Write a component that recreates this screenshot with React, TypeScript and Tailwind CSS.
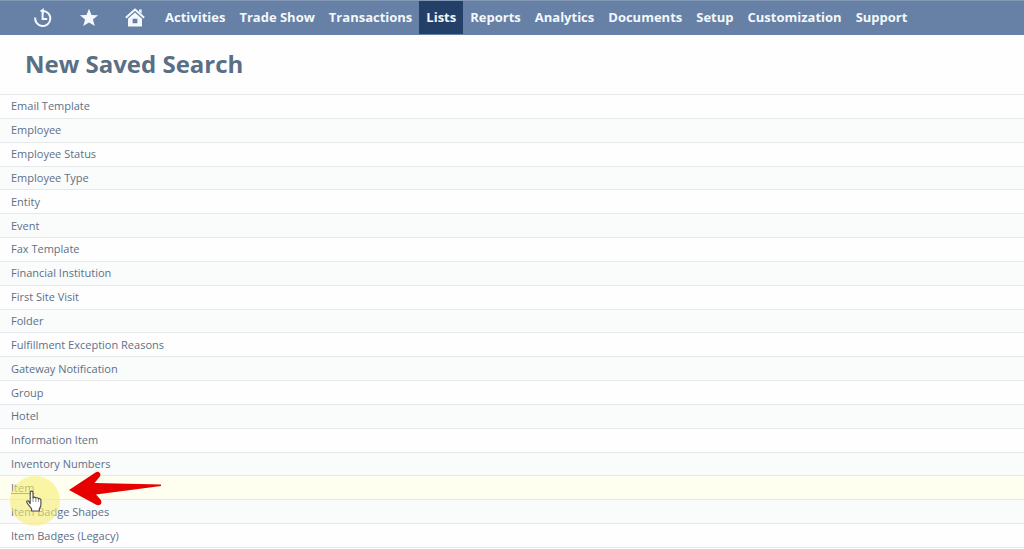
interface NavItem {
  label: string;
  active?: boolean;
}

const NAV_ITEMS: NavItem[] = [
  { label: "Activities" },
  { label: "Trade Show" },
  { label: "Transactions" },
  { label: "Lists", active: true },
  { label: "Reports" },
  { label: "Analytics" },
  { label: "Documents" },
  { label: "Setup" },
  { label: "Customization" },
  { label: "Support" },
];

const SEARCH_TYPES = [
  "Email Template",
  "Employee",
  "Employee Status",
  "Employee Type",
  "Entity",
  "Event",
  "Fax Template",
  "Financial Institution",
  "First Site Visit",
  "Folder",
  "Fulfillment Exception Reasons",
  "Gateway Notification",
  "Group",
  "Hotel",
  "Information Item",
  "Inventory Numbers",
  "Item",
  "Item Badge Shapes",
  "Item Badges (Legacy)",
];

const HOVERED = "Item";

function RecentIcon() {
  return (
    <svg width="20" height="20" viewBox="0 0 20 20" fill="none" stroke="currentColor" aria-hidden="true">
      <path d="M2.200 9.500A7.600 7.600 0 1 0 10 2.900" strokeWidth="2" />
      <path d="M10.800 0v5.800L6.800 2.900z" fill="currentColor" stroke="none" />
      <path d="M9.600 4.500v6.500h4.600" strokeWidth="2" />
    </svg>
  );
}

function StarIcon() {
  return (
    <svg width="20" height="20" viewBox="0 0 20 20" fill="currentColor" aria-hidden="true">
      <path d="M10 .8l2.500 6.200 6.600.3-5.200 4.100 1.900 6.700-5.800-3.700-5.800 3.700 1.900-6.700L.9 7.300l6.600-.3z" />
    </svg>
  );
}

function HomeIcon() {
  return (
    <svg width="20" height="20" viewBox="0 0 20 20" fill="currentColor" aria-hidden="true">
      <path d="M14 1.400h2.600v4.400L14 3.400z" />
      <path d="M.8 9.800L10 1.600l9.200 8.200" fill="none" stroke="currentColor" strokeWidth="2" />
      <path d="M10 4.600l7 6.200v7.600H3v-7.600zM7.600 10.800v4.400h4.800v-4.400z" fillRule="evenodd" />
    </svg>
  );
}

function Pointer() {
  return (
    <svg width="18" height="23" viewBox="0 0 18 23" aria-hidden="true">
      <path
        d="M5.200 13.600V2.600c0-2 2.800-2 2.800 0V8c.4-1.300 2.600-1.200 2.800.3.6-1 2.500-.7 2.600.7.8-.8 2.500-.4 2.500 1.100v4.700c0 2-1.300 3-1.600 4.500V21H6.600v-2C5.800 17.200 3.800 15.600 2.200 13c-1.300-2 .6-3.100 1.800-1.400z"
        fill="#fff"
        stroke="#444"
        strokeWidth="1.1"
        strokeLinejoin="round"
      />
      <path d="M8 8v4M10.800 8.500V12M13.400 9.500V12" stroke="#777" strokeWidth="0.8" />
    </svg>
  );
}

function Arrow() {
  return (
    <svg width="94" height="36" viewBox="0 0 94 36" aria-hidden="true">
      <path
        d="M1 19L27.500 1.400c3.500-2 6.500 2 4 4.600L26.500 12 93 13.500v1.500L28 23.500l4.500 5c2.500 4-.8 6.800-4.300 5.300z"
        fill="#e60000"
      />
    </svg>
  );
}

function NavBar() {
  return (
    <nav className="flex h-[35px] shrink-0 items-stretch overflow-hidden border-t border-[#8199b5] bg-[#6780a5] pb-px text-[#f3f8fc]">
      <div className="flex shrink-0 items-center gap-[26px] pr-[13px] pl-[33px]">
        <button type="button" aria-label="Recent records">
          <RecentIcon />
        </button>
        <button type="button" aria-label="Shortcuts">
          <StarIcon />
        </button>
        <button type="button" aria-label="Home">
          <HomeIcon />
        </button>
      </div>
      <div className="flex text-[13px] font-bold whitespace-nowrap">
        {NAV_ITEMS.map((item) => (
          <a
            key={item.label}
            href="#"
            aria-current={item.active ? "page" : undefined}
            className={`flex items-center px-[7px] ${item.active ? "bg-[#243f68]" : ""}`}
          >
            {item.label}
          </a>
        ))}
      </div>
    </nav>
  );
}

export default function App() {
  return (
    <div className="flex min-h-screen flex-col bg-[#fefefe] pb-px font-['Open_Sans','Noto_Sans',sans-serif]">
      <NavBar />
      <h1 className="flex h-[60px] shrink-0 items-center border-b border-[#e6e8ea] px-[25px] pb-px text-2xl font-bold text-[#5a6f84]">
        New Saved Search
      </h1>
      <ul className="grid flex-1 auto-rows-fr text-[11px] leading-4 text-[#5d7088]">
        {SEARCH_TYPES.map((type) => {
          const hovered = type === HOVERED;
          return (
            <li
              key={type}
              className={`relative flex items-center border-b border-[#e6e9eb] px-[11px] ${
                hovered ? "z-10 bg-[#fffff0]" : "odd:bg-[#fefefe] even:bg-[#fafbfb]"
              }`}
            >
              <a href="#" className={hovered ? "underline" : ""}>
                {type}
              </a>
              {hovered && (
                <div className="pointer-events-none">
                  {/* click highlight */}
                  <span className="absolute top-0 left-[10px] size-[50px] rounded-full bg-[#f7ef72]/60" />
                  <span className="absolute top-[14px] left-[25px]">
                    <Pointer />
                  </span>
                  <span className="absolute -top-[5px] left-[68px]">
                    <Arrow />
                  </span>
                </div>
              )}
            </li>
          );
        })}
      </ul>
    </div>
  );
}
